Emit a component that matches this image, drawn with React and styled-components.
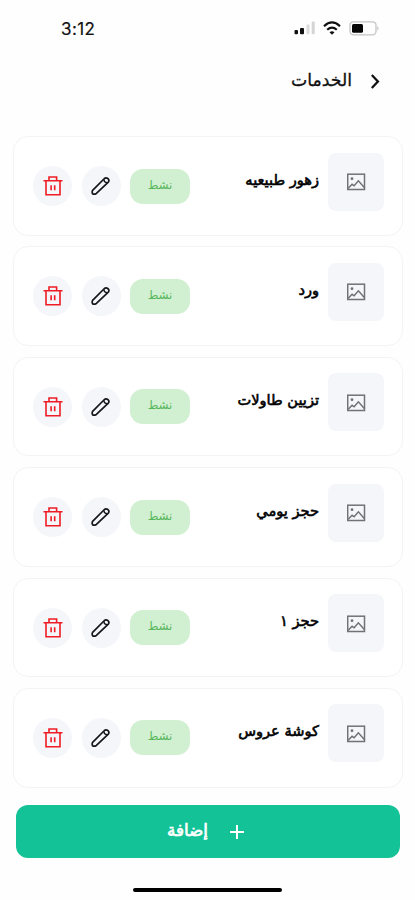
import React from 'react';
import styled, { createGlobalStyle } from 'styled-components';

const GlobalStyle = createGlobalStyle`
  * { box-sizing: border-box; }
  body { margin: 0; background: #fefefe; }
`;

const Screen = styled.main`
  width: 415px;
  height: 900px;
  overflow: hidden;
  display: flex;
  flex-direction: column;
  direction: rtl;
  background: #fefefe;
  color: #111;
  font-family: 'DejaVu Sans', sans-serif;
`;

const StatusBar = styled.div`
  direction: ltr;
  display: flex;
  justify-content: space-between;
  align-items: center;
  height: 56px;
  padding: 0 35px 0 61px;
`;

const Clock = styled.span`
  font: 400 17px/20px Inter, sans-serif;
  letter-spacing: 0.4px;
  -webkit-text-stroke: 0.2px #111;
  padding-top: 2px;
`;

const StatusIcons = styled.div`
  display: flex;
  align-items: center;
  gap: 8px;
  svg { display: block; }
`;

const Header = styled.header`
  display: flex;
  align-items: center;
  height: 50px;
  padding-right: 35px;
  gap: 19px;
  svg { display: block; }
`;

const Title = styled.h1`
  margin: 0;
  padding-bottom: 2px;
  font-size: 17.3px;
  line-height: 22px;
  font-weight: 400;
  -webkit-text-stroke: 0.3px #111;
`;

const List = styled.section`
  display: flex;
  flex-direction: column;
  gap: 10.8px;
  margin: 30px 12px 0 13px;
`;

const Card = styled.article`
  display: flex;
  align-items: flex-start;
  height: 99.6px;
  padding: 15.5px 18px 0 19px;
  border: 1.5px solid #f3f3f4;
  border-radius: 15px;
  background: #fff;
`;

const Thumb = styled.div`
  display: grid;
  place-items: center;
  flex: none;
  width: 56px;
  height: 58px;
  padding-top: 1px;
  border-radius: 8px;
  background: #f4f6fa;
`;

const Name = styled.h2`
  flex: 1;
  margin: 16px 9px 0 0;
  font-size: 14.6px;
  line-height: 22px;
  font-weight: 400;
  color: #000;
  -webkit-text-stroke: 0.6px #000;
  white-space: nowrap;
`;

const Actions = styled.div`
  display: flex;
  align-items: center;
  gap: 9.5px;
  margin-top: 13.5px;
`;

const Status = styled.span`
  display: flex;
  justify-content: center;
  width: 60px;
  height: 35px;
  padding-top: 6px;
  border-radius: 13px;
  background: #d1efd1;
  color: #55b65a;
  font-size: 11.5px;
  line-height: 20px;
`;

const IconButton = styled.button`
  display: grid;
  place-items: center;
  width: 39px;
  height: 40px;
  padding: 0;
  border: 0;
  border-radius: 50%;
  background: #f5f6fa;
  color: ${(p) => (p.$danger ? '#ee1c24' : '#16171b')};
`;

const AddButton = styled.button`
  display: flex;
  justify-content: center;
  align-items: center;
  gap: 22px;
  flex: none;
  height: 53px;
  margin: 17.2px 15px 0 16px;
  padding: 1px 5px 0 0;
  border: 0;
  border-radius: 12px;
  background: #13c296;
  color: #fff;
  font: 400 16.8px/22px 'DejaVu Sans', sans-serif;
`;

const AddLabel = styled.span`
  padding-bottom: 3px;
  -webkit-text-stroke: 0.7px #fff;
`;

const HomeIndicator = styled.div`
  flex: none;
  align-self: center;
  width: 149px;
  height: 4px;
  margin-top: 30px;
  border-radius: 2px;
  background: #000;
`;

const SignalIcon = () => (
  <svg width="22" height="14" viewBox="0 0 22 14">
    <rect x="1.5" y="9" width="3.5" height="4.2" rx="1" fill="#111" />
    <rect x="7" y="7" width="4" height="6.2" rx="1" fill="#111" />
    <rect x="13.5" y="3.5" width="3" height="9.7" rx="1" fill="#dcdcdc" />
    <rect x="18.7" y="0.5" width="3" height="12.7" rx="1" fill="#d5d5d5" />
  </svg>
);

const WifiIcon = () => (
  <svg width="18" height="14" viewBox="0 0 18 14" fill="none" stroke="#111" strokeWidth="2.2">
    <path d="M1 5.2Q9-2.3 17 5.2" />
    <path d="M4.2 8.7Q9 4.4 13.8 8.7" />
    <path d="M6.5 11.2Q9 9.3 11.5 11.2L9 13.8Z" fill="#111" stroke="none" />
  </svg>
);

const BatteryIcon = () => (
  <svg width="31" height="15" viewBox="0 0 31 15">
    <rect x="1" y="0.8" width="26" height="13" rx="3.5" fill="none" stroke="#c4c4c4" strokeWidth="1.3" />
    <rect x="3" y="3" width="11" height="8.7" rx="1.5" fill="#050505" />
    <path d="M28.3 5.2Q31 7.3 28.3 9.6Z" fill="#c4c4c4" />
  </svg>
);

const ChevronIcon = () => (
  <svg width="9" height="15" viewBox="0 0 9 15" fill="none" stroke="#111" strokeWidth="2.3">
    <path d="M0.8 1L6.9 7.5L0.8 14" />
  </svg>
);

const ImageIcon = () => (
  <svg width="19" height="18" viewBox="0 0 19 18" fill="none" stroke="#707276" strokeWidth="1.5">
    <rect x="0.7" y="1.2" width="16.8" height="15.3" />
    <circle cx="5" cy="5.7" r="1.4" fill="#707276" stroke="none" />
    <path d="M1.2 15.3L5.1 11.3L7.1 12.8L11.4 7.8L17.3 14.4" />
  </svg>
);

const PencilIcon = () => (
  <svg width="20" height="20" viewBox="0 0 20 20" fill="none" stroke="currentColor" strokeWidth="1.7" strokeLinejoin="round">
    <path d="M1.6 14.4L13.4 2.5Q15.1 1.1 17 2.7Q18.7 4.4 17.3 6.1L5.4 17.4Q3.5 18.5 1.8 18Q0.6 16.2 1.6 14.4Z" />
    <path d="M13 3.2Q12.8 6.5 16.3 6.7" strokeWidth="1.5" />
  </svg>
);

const TrashIcon = () => (
  <svg width="20" height="20" viewBox="0 0 20 20" fill="none" stroke="currentColor" strokeWidth="1.6">
    <path d="M0.5 4.8H19.5M6 4.6V1H13.6V4.6M3 4.8V18.8H17V4.8" />
    <path d="M8.1 9.2V14.2M11.7 9.2V14.2" />
  </svg>
);

const PlusIcon = () => (
  <svg width="14" height="14" viewBox="0 0 14 14" stroke="#fff" strokeWidth="2">
    <path d="M7 0V14M0 7H14" />
  </svg>
);

const services = ['زهور طبيعيه', 'ورد', 'تزيين طاولات', 'حجز يومي', 'حجز ١', 'كوشة عروس'];

export default function App() {
  return (
    <Screen>
      <GlobalStyle />
      <StatusBar>
        <Clock>3:12</Clock>
        <StatusIcons>
          <SignalIcon />
          <WifiIcon />
          <BatteryIcon />
        </StatusIcons>
      </StatusBar>
      <Header>
        <ChevronIcon />
        <Title>الخدمات</Title>
      </Header>
      <List>
        {services.map((name) => (
          <Card key={name}>
            <Thumb><ImageIcon /></Thumb>
            <Name>{name}</Name>
            <Actions>
              <Status>نشط</Status>
              <IconButton aria-label="تعديل"><PencilIcon /></IconButton>
              <IconButton $danger aria-label="حذف"><TrashIcon /></IconButton>
            </Actions>
          </Card>
        ))}
      </List>
      <AddButton>
        <PlusIcon />
        <AddLabel>إضافة</AddLabel>
      </AddButton>
      <HomeIndicator />
    </Screen>
  );
}
